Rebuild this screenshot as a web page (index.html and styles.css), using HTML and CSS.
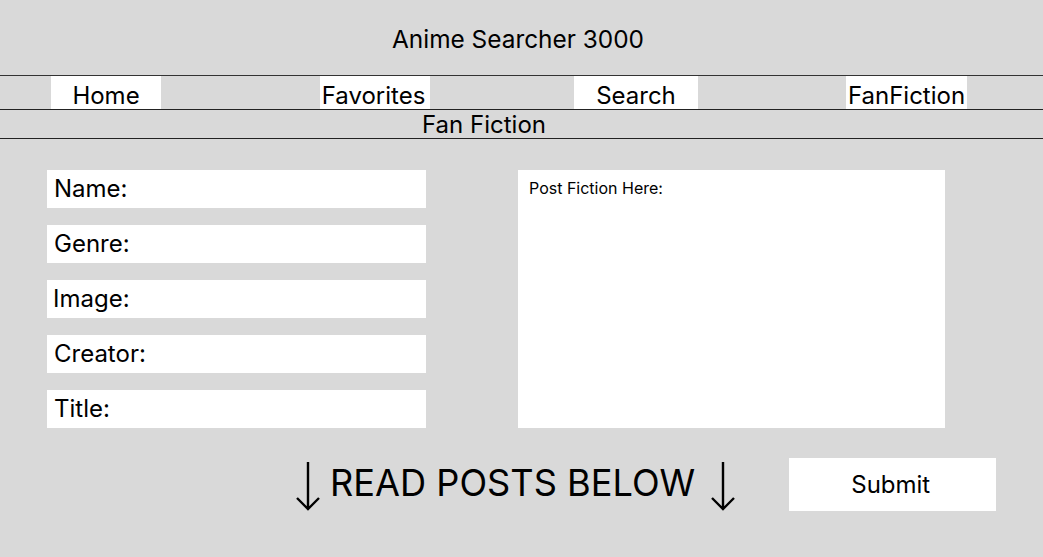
FILE: index.html
```html
<!DOCTYPE html>
<html lang="en">
<head>
<meta charset="utf-8">
<title>Anime Searcher 3000</title>
<link rel="stylesheet" href="styles.css">
</head>
<body>
<header class="site-header">
  <h1 class="site-title">Anime Searcher 3000</h1>
</header>
<nav class="nav">
  <a class="nav-item nav-home" href="#">Home</a>
  <a class="nav-item nav-fav" href="#">Favorites</a>
  <a class="nav-item nav-search" href="#">Search</a>
  <a class="nav-item nav-fan" href="#">FanFiction</a>
</nav>
<div class="page-title">Fan Fiction</div>
<main class="content">
  <form class="fields">
    <div class="field">Name:</div>
    <div class="field">Genre:</div>
    <div class="field field-image">Image:</div>
    <div class="field">Creator:</div>
    <div class="field">Title:</div>
  </form>
  <div class="post-box">Post Fiction Here:</div>
</main>
<div class="bottom-row">
  <div class="read-posts">
    <svg class="arrow" width="26" height="50" viewBox="0 0 26 50" aria-hidden="true">
      <path d="M13 1 V48 M2 37 L13 48 L24 37" fill="none" stroke="#000" stroke-width="2.4"/>
    </svg>
    <span class="read-text">READ POSTS BELOW</span>
    <svg class="arrow arrow-right" width="26" height="50" viewBox="0 0 26 50" aria-hidden="true">
      <path d="M13 1 V48 M2 37 L13 48 L24 37" fill="none" stroke="#000" stroke-width="2.4"/>
    </svg>
  </div>
  <button class="submit" type="button">Submit</button>
</div>
</body>
</html>
```

FILE: styles.css
```css
html, body {
  margin: 0;
  padding: 0;
}
body {
  background: #d9d9d9;
  font-family: "Inter", "Liberation Sans", sans-serif;
  color: #000;
  width: 1043px;
  height: 557px;
  overflow: hidden;
}
.site-header {
  height: 75px;
  display: flex;
  align-items: center;
  justify-content: center;
  padding: 3px 7px 0 0;
  box-sizing: border-box;
}
.site-title {
  margin: 0;
  font-size: 24.4px;
  font-weight: 400;
  line-height: 1;
}
.nav {
  display: flex;
  align-items: flex-start;
  border-top: 1px solid #333;
  border-bottom: 1px solid #222;
  padding-left: 51px;
  box-sizing: border-box;
  height: 35px;
}
.nav-item {
  background: #fff;
  color: #000;
  text-decoration: none;
  font-size: 24px;
  line-height: 1;
  height: 33px;
  display: flex;
  align-items: center;
  justify-content: center;
  padding-top: 6px;
  box-sizing: border-box;
}
.nav-home { width: 110px; }
.nav-fav { width: 110px; margin-left: 159px; padding-right: 3px; }
.nav-search { width: 124px; margin-left: 144px; }
.nav-fan { width: 121px; margin-left: 148px; }
.page-title {
  height: 29px;
  border-bottom: 1px solid #222;
  box-sizing: border-box;
  text-align: center;
  padding-right: 75px;
  font-size: 24px;
  line-height: 29px;
}
.content {
  display: flex;
  align-items: flex-start;
  padding: 31px 0 0 47px;
  gap: 92px;
}
.fields {
  display: flex;
  flex-direction: column;
  gap: 17px;
  width: 379px;
  margin: 0;
}
.field {
  background: #fff;
  height: 38px;
  box-sizing: border-box;
  padding-left: 7px;
  font-size: 24px;
  line-height: 38px;
}
.field-image { padding-left: 6px; }
.post-box {
  background: #fff;
  width: 427px;
  height: 258px;
  box-sizing: border-box;
  padding: 8px 11px;
  font-size: 16px;
  line-height: 20px;
}
.bottom-row {
  display: flex;
  align-items: center;
  margin-top: 30px;
  padding-left: 295px;
}
.read-posts {
  display: flex;
  align-items: center;
  gap: 9px;
}
.arrow {
  display: block;
  margin-top: 2px;
}
.arrow-right { margin-left: 6px; }
.read-text {
  font-size: 36.2px;
  line-height: 44px;
  margin-top: -3px;
}
.submit {
  margin-left: 53px;
  width: 207px;
  height: 53px;
  border: none;
  background: #fff;
  font-family: "Inter", "Liberation Sans", sans-serif;
  font-size: 24px;
  color: #000;
  padding: 0 4px 0 0;
}
```
